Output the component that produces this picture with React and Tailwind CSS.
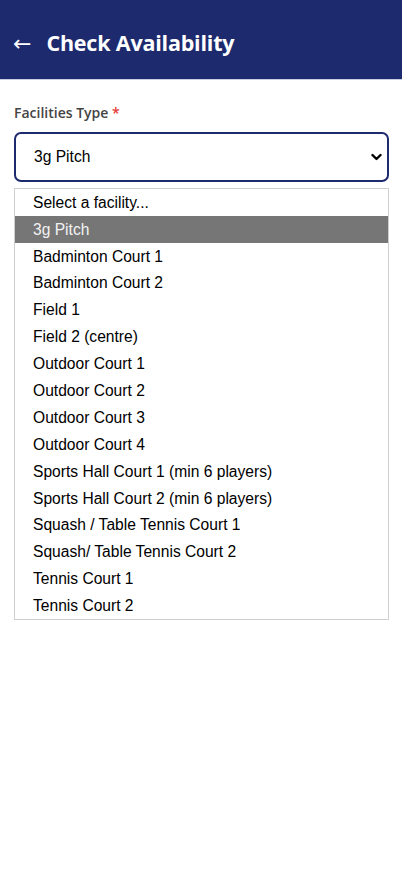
import { useState } from 'react';

const FACILITIES = [
  'Select a facility...',
  '3g Pitch',
  'Badminton Court 1',
  'Badminton Court 2',
  'Field 1',
  'Field 2 (centre)',
  'Outdoor Court 1',
  'Outdoor Court 2',
  'Outdoor Court 3',
  'Outdoor Court 4',
  'Sports Hall Court 1 (min 6 players)',
  'Sports Hall Court 2 (min 6 players)',
  'Squash / Table Tennis Court 1',
  'Squash/ Table Tennis Court 2',
  'Tennis Court 1',
  'Tennis Court 2',
];

const App = () => {
  const [selected, setSelected] = useState('3g Pitch');

  return (
    <div className="min-h-[874px] bg-white font-['Open_Sans',sans-serif]">
      {/* Header */}
      <header className="h-[80px] bg-[#1d2a6e] border-b border-[#c9cde0] flex items-center pl-[13px] pt-[8px]">
        <span className="text-white text-[22px] leading-none mr-[15px] font-['DejaVu_Sans',sans-serif]">←</span>
        <h1 className="text-white text-[21.5px] font-bold tracking-[-0.2px]">Check Availability</h1>
      </header>

      <main className="pl-[14px] pr-[13px] pt-[23px]">
        <label className="block text-[14px] leading-[20px] font-semibold text-[#444] mb-[9px]">
          Facilities Type <span className="text-[#e53935]">*</span>
        </label>

        {/* Select box */}
        <div className="h-[50px] border-2 border-[#1d2a6e] rounded-[7px] flex items-center font-['Liberation_Sans',Arial,sans-serif]">
          <div className="w-[18px] h-[20px] shrink-0 bg-white" />
          <div className="flex-1 text-[15.6px] text-black bg-white">{selected}</div>
          <svg className="mr-[5px] shrink-0" width="11" height="8" viewBox="0 0 11 8" fill="none" stroke="black" strokeWidth="2.4" strokeLinecap="round" strokeLinejoin="round">
            <path d="M1.5 2l4 4 4-4" />
          </svg>
        </div>

        {/* Open option list */}
        <ul className="mt-[6px] border border-[#cfcfcf] font-['Liberation_Sans',Arial,sans-serif]">
          {FACILITIES.map((f) => (
            <li
              key={f}
              onClick={() => setSelected(f)}
              className={`h-[26.9px] flex items-center pl-[18px] text-[15.6px] ${
                f === selected ? 'bg-[#767676] text-[#f2f2f2]' : 'text-black'
              }`}
            >
              {f}
            </li>
          ))}
        </ul>
      </main>
    </div>
  );
};

export default App;
